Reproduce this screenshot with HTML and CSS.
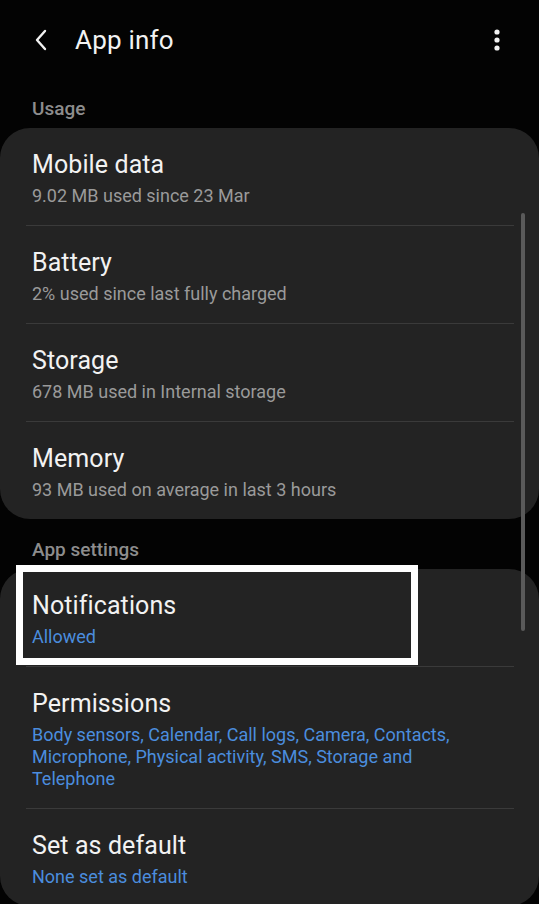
FILE: index.html
```html
<!DOCTYPE html>
<html>
<head>
<meta charset="utf-8">
<link rel="stylesheet" href="styles.css">
</head>
<body>
<div class="screen">
  <header class="appbar">
    <span class="back">
      <svg width="16" height="24" viewBox="0 0 16 24"><path d="M12 3 L4 12 L12 21" fill="none" stroke="#f2f2f2" stroke-width="2.4" stroke-linecap="round" stroke-linejoin="round"/></svg>
    </span>
    <h1 class="title">App info</h1>
    <span class="more">
      <svg width="8" height="24" viewBox="0 0 8 24"><circle cx="4" cy="4" r="2.6" fill="#f2f2f2"/><circle cx="4" cy="12" r="2.6" fill="#f2f2f2"/><circle cx="4" cy="20" r="2.6" fill="#f2f2f2"/></svg>
    </span>
  </header>

  <div class="label label-first">Usage</div>
  <section class="card">
    <div class="row">
      <div class="row-title">Mobile data</div>
      <div class="row-sub">9.02 MB used since 23 Mar</div>
    </div>
    <div class="divider"></div>
    <div class="row">
      <div class="row-title">Battery</div>
      <div class="row-sub">2% used since last fully charged</div>
    </div>
    <div class="divider"></div>
    <div class="row">
      <div class="row-title">Storage</div>
      <div class="row-sub">678 MB used in Internal storage</div>
    </div>
    <div class="divider"></div>
    <div class="row">
      <div class="row-title">Memory</div>
      <div class="row-sub">93 MB used on average in last 3 hours</div>
    </div>
  </section>

  <div class="label">App settings</div>
  <section class="card card-last">
    <div class="row row-highlight">
      <div class="row-title">Notifications</div>
      <div class="row-sub blue">Allowed</div>
      <div class="highlight"></div>
    </div>
    <div class="divider"></div>
    <div class="row">
      <div class="row-title">Permissions</div>
      <div class="row-sub blue">Body sensors, Calendar, Call logs, Camera, Contacts, Microphone, Physical activity, SMS, Storage and Telephone</div>
    </div>
    <div class="divider"></div>
    <div class="row">
      <div class="row-title">Set as default</div>
      <div class="row-sub blue">None set as default</div>
    </div>
  </section>

  <div class="scrollbar"></div>
</div>
</body>
</html>
```

FILE: styles.css
```css
* { box-sizing: border-box; }
html, body {
  margin: 0;
  padding: 0;
  background: #030303;
}
body {
  font-family: Roboto, "Noto Sans", sans-serif;
  color: #f2f2f2;
  width: 539px;
  height: 904px;
  overflow: hidden;
}
.screen {
  position: relative;
  height: 904px;
  overflow: hidden;
}
.appbar {
  height: 80px;
  display: flex;
  align-items: center;
  padding: 0 0 0 33px;
}
.back {
  display: flex;
  width: 16px;
  height: 24px;
  margin-right: 26px;
}
.title {
  margin: 0;
  font-size: 26px;
  font-weight: 400;
  letter-spacing: 0.2px;
  flex: 1;
  line-height: 32px;
}
.more {
  display: flex;
  width: 8px;
  height: 24px;
  margin-right: 38px;
}
.label {
  padding-left: 32px;
  font-size: 19px;
  font-weight: 500;
  color: #8d8d8d;
  line-height: 22px;
  margin: 20px 0 8px;
}
.label-first {
  margin: 18px 0 8px;
}
.card {
  background: #232323;
  border-radius: 30px;
}
.row {
  position: relative;
  padding: 22px 50px 18px 32px;
  min-height: 97px;
}
.row-title {
  font-size: 25px;
  line-height: 30px;
  color: #f2f2f2;
  letter-spacing: 0.1px;
}
.row-sub {
  margin-top: 5px;
  font-size: 18px;
  line-height: 22px;
  color: #9a9a9a;
}
.row-sub.blue {
  color: #4b8dde;
}
.divider {
  height: 1px;
  background: #3a3a3a;
  margin: 0 25px 0 26px;
}
.highlight {
  position: absolute;
  left: 16px;
  top: -4px;
  width: 402px;
  height: 100px;
  border: 7px solid #ffffff;
}
.scrollbar {
  position: absolute;
  left: 521px;
  top: 213px;
  width: 4px;
  height: 418px;
  border-radius: 2px;
  background: #5a5a5a;
}
```
